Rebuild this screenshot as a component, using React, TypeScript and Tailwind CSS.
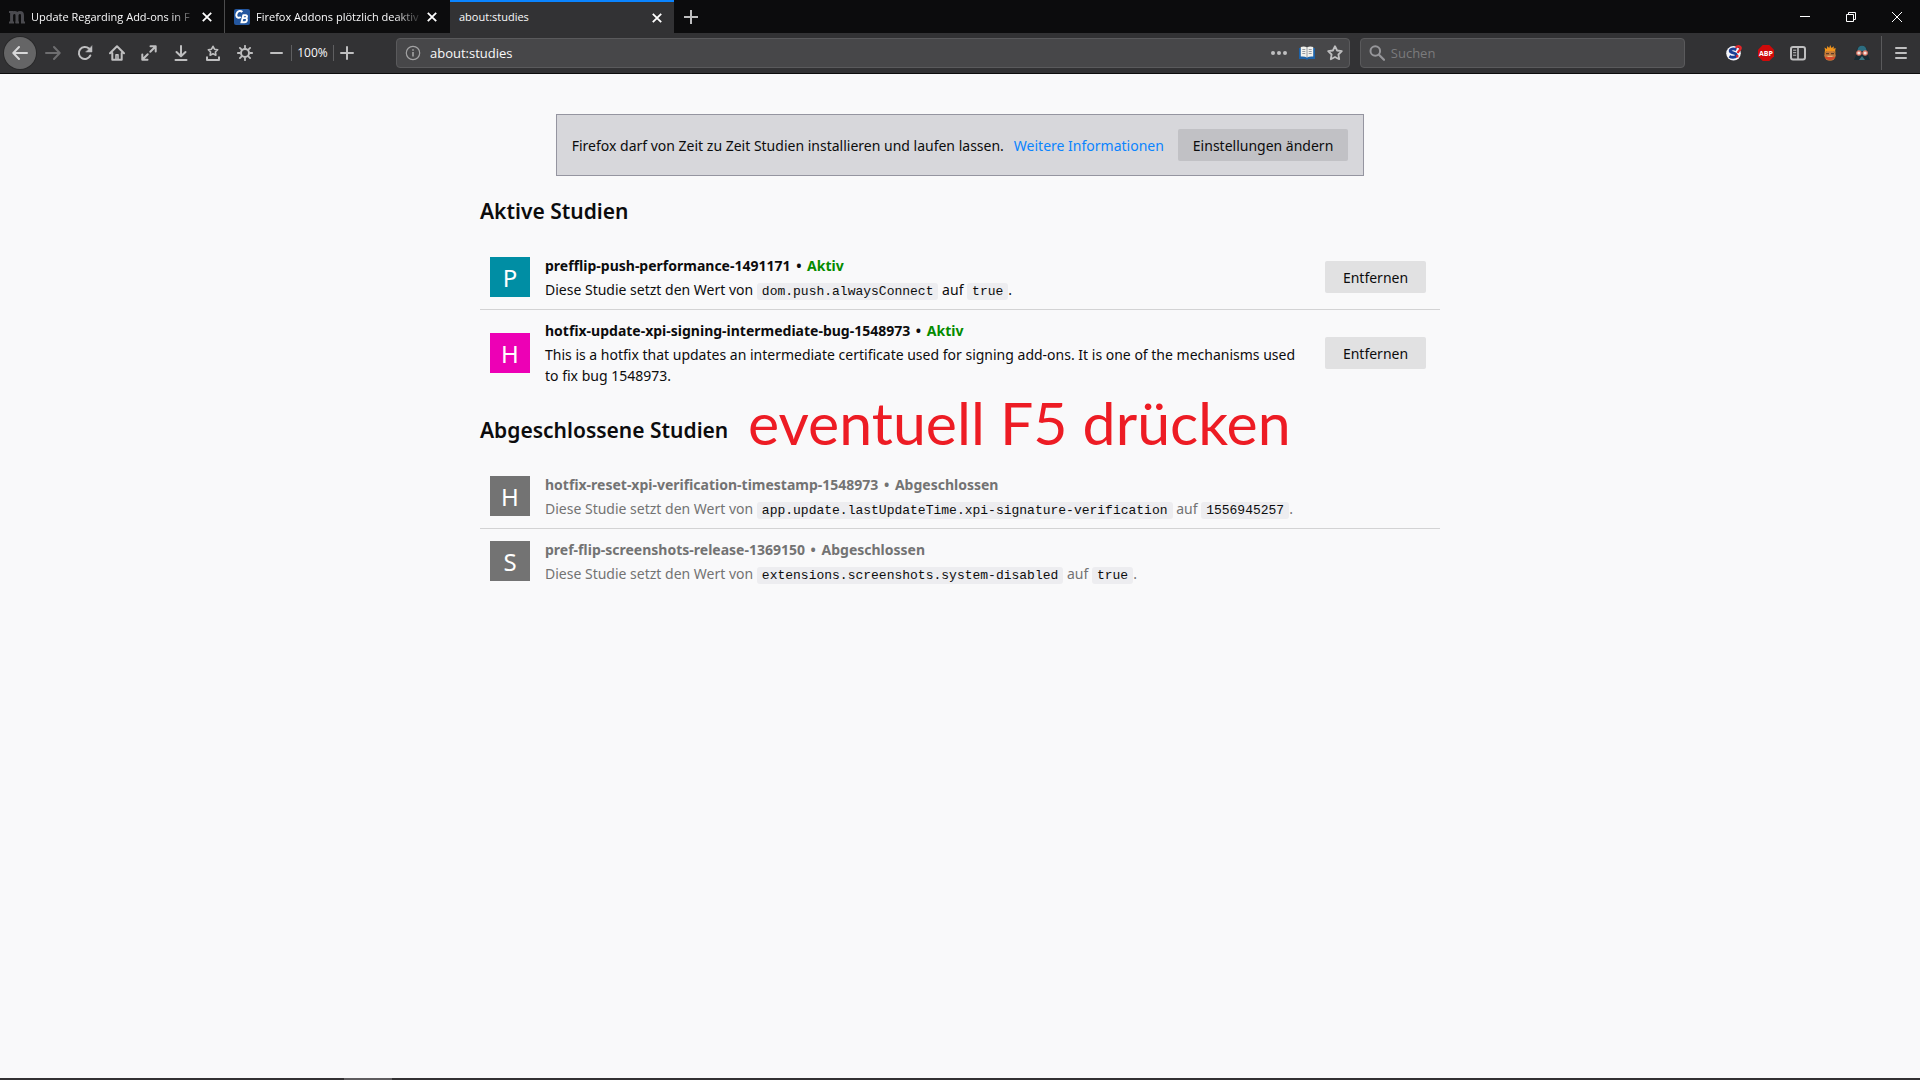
import type { ReactNode } from "react";

function Glyph({ children, size = 16, className = "" }: { children: ReactNode; size?: number; className?: string }) {
  return (
    <svg
      width={size}
      height={size}
      viewBox="0 0 16 16"
      fill="none"
      stroke="currentColor"
      strokeWidth="2"
      strokeLinecap="round"
      strokeLinejoin="round"
      className={"shrink-0 " + className}
      aria-hidden="true"
    >
      {children}
    </svg>
  );
}

function ToolButton({ label, children, className = "w-8" }: { label: string; children: ReactNode; className?: string }) {
  return (
    <button type="button" aria-label={label} className={"flex h-8 shrink-0 items-center justify-center " + className}>
      {children}
    </button>
  );
}

function CloseButton({ className = "" }: { className?: string }) {
  return (
    <button type="button" aria-label="Tab schließen" className={"shrink-0 text-white " + className}>
      <svg width="10" height="10" viewBox="0 0 10 10" stroke="currentColor" strokeWidth="1.8" aria-hidden="true">
        <path d="M.8.8l8.4 8.4M9.2.8L.8 9.2" />
      </svg>
    </button>
  );
}

function BackgroundTab({ title, icon, last = false }: { title: string; icon: ReactNode; last?: boolean }) {
  return (
    <div
      className={"flex w-[225px] items-center pl-[9px] " + (last ? "pr-[13px]" : "border-r border-[#4c4c4d] pr-3")}
    >
      {icon}
      <span className="ml-1.5 min-w-0 flex-1 overflow-hidden pt-px whitespace-nowrap [mask-image:linear-gradient(to_left,transparent,black_28px)]">
        {title}
      </span>
      <CloseButton className="ml-1" />
    </div>
  );
}

function TabBar() {
  return (
    <header className="flex h-[33px] bg-[#0c0c0d] text-[11px] text-[#f9f9fa]">
      <BackgroundTab
        title="Update Regarding Add-ons in F"
        icon={
          <svg width="16" height="14" viewBox="0 0 16 14" className="shrink-0" fill="none" stroke="#4a4a4f" strokeWidth="3" aria-hidden="true">
            <path d="M2.6 1v12M2.600 5c.5-1.700 1.500-2.500 2.900-2.500 1.800 0 2.500 1 2.500 2.900V13M8 5c.5-1.700 1.600-2.500 3-2.500 1.800 0 2.500 1 2.500 2.900V13" />
            <path d="M0 2h3M0 12.500h5M6.500 12.500h3.500M12 12.500h4" strokeWidth="1.800" />
          </svg>
        }
      />
      <BackgroundTab
        last
        title="Firefox Addons plötzlich deaktiv"
        icon={
          <svg width="16" height="16" viewBox="0 0 16 16" className="shrink-0" aria-hidden="true">
            <rect width="16" height="16" rx="2" fill="#24579f" />
            <path d="M8.300 3C7 1.500 4.600 1.600 3.300 3.300 1.800 5.300 2 8 3.800 8.600c1 .3 2 0 2.900-.6" fill="none" stroke="#fff" strokeWidth="2" />
            <path d="M8.600 6.200h3.200c1.700 0 1.700 2.800-.3 2.900H8.700M9.300 6.200L7.500 13.300h3c2.900 0 3.300-4.100.8-4.200" fill="none" stroke="#fff" strokeWidth="1.900" />
          </svg>
        }
      />
      <div className="flex w-[224px] items-center border-t-2 border-[#0a84ff] bg-[#323234] pr-3 pl-[9px]">
        <span className="flex-1">about:studies</span>
        <CloseButton />
      </div>
      <button type="button" aria-label="Neuer Tab" className="flex w-[34px] items-center justify-center text-[#bebebf]">
        <svg width="14" height="14" viewBox="0 0 14 14" stroke="currentColor" strokeWidth="2" aria-hidden="true">
          <path d="M7 0v14M0 7h14" />
        </svg>
      </button>
      <div className="ml-auto flex text-white">
        <button type="button" aria-label="Minimieren" className="flex w-[46px] items-center justify-center">
          <svg width="10" height="10" viewBox="0 0 10 10" stroke="currentColor" aria-hidden="true">
            <path d="M0 4.500h10" />
          </svg>
        </button>
        <button type="button" aria-label="Verkleinern" className="flex w-[46px] items-center justify-center">
          <svg width="10" height="10" viewBox="0 0 10 10" fill="none" stroke="currentColor" aria-hidden="true">
            <path d="M.5 2.500h7v7h-7zM2.500 2.500v-2h7v7h-2" />
          </svg>
        </button>
        <button type="button" aria-label="Schließen" className="flex w-[46px] items-center justify-center">
          <svg width="10" height="10" viewBox="0 0 10 10" stroke="currentColor" aria-hidden="true">
            <path d="M0 0l10 10M10 0L0 10" />
          </svg>
        </button>
      </div>
    </header>
  );
}

function NavBar() {
  return (
    <nav className="flex h-[41px] items-center border-b border-[#0c0c0d] bg-[#323234] pr-[3px] pl-1 text-[#bfbfc0]">
      <ToolButton label="Zurück" className="w-8 rounded-full bg-[#656566] text-[#d8d8d9] ring-1 ring-[#29292a]">
        <Glyph>
          <path d="M15 8H1.500M7 2L1.300 8 7 14" />
        </Glyph>
      </ToolButton>
      <ToolButton label="Vor" className="ml-px w-8 text-[#6e6e70]">
        <Glyph>
          <path d="M1 8h13.500M9 2l5.700 6L9 14" />
        </Glyph>
      </ToolButton>
      <ToolButton label="Neu laden">
        <Glyph>
          <path d="M13.300 10.500A6 6 0 1 1 12 3.600l1.500 1.500" />
          <path d="M15 1v6H9z" fill="currentColor" strokeWidth="0.500" />
        </Glyph>
      </ToolButton>
      <ToolButton label="Startseite">
        <Glyph>
          <path d="M1 8.300L8 1.300l7 7M3.300 8v6.700h9.400V8" />
          <path d="M7 14V9.800h2V14" strokeWidth="1.600" />
        </Glyph>
      </ToolButton>
      <ToolButton label="Vollbild">
        <Glyph>
          <path d="M9.300 6.700l5-5M9.500 1.300h5.200v5.200M6.700 9.300l-5 5M1.300 9.500v5.200h5.200" />
        </Glyph>
      </ToolButton>
      <ToolButton label="Downloads">
        <Glyph>
          <path d="M8 1v10M3.500 7L8 11.300 12.500 7M2.500 15h11" />
        </Glyph>
      </ToolButton>
      <ToolButton label="Lesezeichen">
        <Glyph>
          <path d="M8 1.300l1.500 2.900 3.200.5-2.300 2.300.5 3.200L8 8.700l-2.900 1.500.5-3.200-2.300-2.300 3.200-.5z" strokeWidth="1.600" />
          <path d="M2 11.500V15h12v-3.500" strokeLinecap="butt" />
        </Glyph>
      </ToolButton>
      <ToolButton label="Einstellungen">
        <Glyph>
          <circle cx="8" cy="8" r="4" />
          <path d="M8 .8v2M8 13.200v2M.8 8h2M13.200 8h2M2.900 2.900l1.500 1.500M11.600 11.600l1.500 1.500M13.100 2.900l-1.500 1.500M4.400 11.600l-1.500 1.500" strokeWidth="1.800" />
        </Glyph>
      </ToolButton>
      <ToolButton label="Verkleinern" className="w-[30px]">
        <Glyph>
          <path d="M3 8h11" />
        </Glyph>
      </ToolButton>
      <button type="button" className="h-4 w-[43px] border-x border-[#5f5f61] text-xs leading-4 text-[#f9f9fa]">
        100%
      </button>
      <ToolButton label="Vergrößern" className="-ml-[3px] w-8">
        <Glyph>
          <path d="M2 8h12M8 2v12" />
        </Glyph>
      </ToolButton>

      <div className="ml-[33px] flex h-[30px] min-w-0 flex-1 items-center rounded-sm border border-[#5a5a5c] bg-[#474749] pr-1.5 pl-2">
        <svg width="16" height="16" viewBox="0 0 16 16" fill="none" stroke="#a3a3a4" className="shrink-0" aria-hidden="true">
          <circle cx="8" cy="8" r="6.700" strokeWidth="1.200" />
          <path d="M8 7v4.500M8 4.200v1.600" strokeWidth="1.600" />
        </svg>
        <input
          aria-label="Adresse"
          defaultValue="about:studies"
          className="ml-[9px] min-w-0 flex-1 bg-transparent pt-0.5 text-[13px] text-[#f9f9fa] outline-none"
        />
        <div className="flex items-center gap-3">
          <button type="button" aria-label="Seitenaktionen">
            <Glyph>
              <g fill="currentColor" stroke="none">
                <circle cx="2" cy="8" r="2" />
                <circle cx="8" cy="8" r="2" />
                <circle cx="14" cy="8" r="2" />
              </g>
            </Glyph>
          </button>
          <button type="button" aria-label="Leseansicht">
            <svg width="16" height="14" viewBox="0 0 16 14" aria-hidden="true">
              <path d="M0 2h16v11H9.500L8 14l-1.500-1H0z" fill="#1d62a8" />
              <path d="M1.800 1Q5.500 0 8 1.500 10.500 0 14.200 1v9.500Q10.500 10 8 11.500 5.500 10 1.800 10.500z" fill="#f1f1ec" />
              <path d="M8 1.500v10M3.300 3.500h3M3.300 5.500h3M3.300 7.500h3M9.700 3.500h3M9.700 5.500h3M9.700 7.500h3" stroke="#8c9198" strokeWidth="0.900" />
            </svg>
          </button>
          <button type="button" aria-label="Lesezeichen hinzufügen">
            <Glyph>
              <path d="M8 1.200l2.100 4.300 4.700.7-3.400 3.300.8 4.700L8 12l-4.200 2.200.8-4.700L1.200 6.200l4.700-.7z" strokeWidth="1.800" />
            </Glyph>
          </button>
        </div>
      </div>

      <div className="ml-2.5 flex h-[30px] w-[17%] items-center rounded-sm border border-[#5a5a5c] bg-[#474749] px-2">
        <Glyph className="text-[#96969a]">
          <circle cx="6.300" cy="6" r="4.800" />
          <path d="M10 9.800l5 5" strokeWidth="2.200" />
        </Glyph>
        <input
          aria-label="Suchen"
          placeholder="Suchen"
          className="ml-[6px] min-w-0 flex-1 bg-transparent pt-0.5 text-[13px] outline-none placeholder:text-[#7b7b7d]"
        />
      </div>

      <div className="ml-[33px] flex items-center">
        <ToolButton label="Startpage">
          <svg width="16" height="16" viewBox="0 0 16 16" aria-hidden="true">
            <circle cx="7.500" cy="8.300" r="7.300" fill="#f4f5fa" />
            <path d="M10.300 4.800C7.500 3.300 4 3.800 4.200 6c.2 2.200 6.300 1.600 6.200 4.100-.1 2.400-4.200 2.800-7 1.100" fill="none" stroke="#1b3f94" strokeWidth="2.800" />
            <path d="M9.800 2.800C11.500.3 15.500 1 14.500 3.800c-.6 1.700-2.300 2-2.700 4.200M11.300 10v2.500" fill="none" stroke="#e3262b" strokeWidth="2.300" />
          </svg>
        </ToolButton>
        <ToolButton label="Adblock Plus">
          <svg width="16" height="16" viewBox="0 0 16 16" aria-hidden="true">
            <path d="M4.700 0h6.600L16 4.700v6.600L11.300 16H4.700L0 11.300V4.700z" fill="#cf0a0a" />
            <text x="8" y="10.600" textAnchor="middle" fontSize="7" fontWeight="700" fill="#fff" fontFamily="Open Sans, sans-serif">
              ABP
            </text>
          </svg>
        </ToolButton>
        <ToolButton label="Seitenleiste">
          <Glyph>
            <rect x="1" y="2" width="14" height="12.500" rx="2" />
            <path d="M8 2v12" strokeWidth="1.600" />
            <path d="M3.500 5.200h2.300M3.500 7.700h2.300M3.500 10.200h2.300" strokeWidth="1" />
          </Glyph>
        </ToolButton>
        <ToolButton label="Cookie-Manager">
          <svg width="16" height="16" viewBox="0 0 16 16" aria-hidden="true">
            <ellipse cx="8" cy="10.300" rx="5.700" ry="5.500" fill="#c57a3c" />
            <path d="M2.500 9L3 5 2.500 2.500 5 4 5.200 1 7.200 3 8.200 0l1.300 3L12 1.200l-.5 2.600L13.700 3l-.5 2.500.3 3-1.500-2.300H4.200z" fill="#f2951d" />
            <path d="M4 8.700h3M9 8.700h3" stroke="#5c3f2a" strokeWidth="1.300" />
            <path d="M2.700 12h10.600a5.500 4 0 0 1-10.600 0z" fill="#d8492b" />
            <path d="M5.500 11.300h5" stroke="#f0c08c" strokeWidth="1" />
          </svg>
        </ToolButton>
        <ToolButton label="Privatsphäre">
          <svg width="16" height="16" viewBox="0 0 16 16" aria-hidden="true">
            <path d="M2.500 6C3 2.500 5 .8 8 .8s5 1.700 5.500 5.200l.8 5 1.700 4H0l1.700-4z" fill="#182b33" />
            <path d="M3.300 6C3.500 2.500 5.300.8 8 .8s4.500 1.700 4.700 5.200z" fill="#2d6d80" />
            <circle cx="4.900" cy="8" r="2.200" fill="#f3e3dc" stroke="#d9705f" strokeWidth="1.200" />
            <circle cx="11.100" cy="8" r="2.200" fill="#f3e3dc" stroke="#d9705f" strokeWidth="1.200" />
            <path d="M5 15l3-4 3 4z" fill="#3b7480" />
          </svg>
        </ToolButton>
        <div className="ml-[3px] h-[34px] w-px bg-[#5a5a5c]" />
        <ToolButton label="Menü" className="ml-[3px] w-8">
          <Glyph>
            <path d="M3 3h10M3 8h10M3 13h10" />
          </Glyph>
        </ToolButton>
      </div>
    </nav>
  );
}

type Study = { name: string; initial: string; color: string; active: boolean; description: ReactNode };

function Code({ children }: { children: string }) {
  return (
    <code className="rounded-[3px] bg-[#ededf0] px-[5px] py-px font-['Liberation_Mono',monospace] text-[13px] leading-4 text-[#0c0c0d]">
      {children}
    </code>
  );
}

function PrefText({ pref, value }: { pref: string; value: string }) {
  return (
    <>
      Diese Studie setzt den Wert von <Code>{pref}</Code> auf <Code>{value}</Code>.
    </>
  );
}

const activeStudies: Study[] = [
  {
    name: "prefflip-push-performance-1491171",
    initial: "P",
    color: "bg-[#008ea4]",
    active: true,
    description: <PrefText pref="dom.push.alwaysConnect" value="true" />,
  },
  {
    name: "hotfix-update-xpi-signing-intermediate-bug-1548973",
    initial: "H",
    color: "bg-[#ed00b5]",
    active: true,
    description:
      "This is a hotfix that updates an intermediate certificate used for signing add-ons. It is one of the mechanisms used to fix bug 1548973.",
  },
];

const completedStudies: Study[] = [
  {
    name: "hotfix-reset-xpi-verification-timestamp-1548973",
    initial: "H",
    color: "bg-[#737373]",
    active: false,
    description: <PrefText pref="app.update.lastUpdateTime.xpi-signature-verification" value="1556945257" />,
  },
  {
    name: "pref-flip-screenshots-release-1369150",
    initial: "S",
    color: "bg-[#737373]",
    active: false,
    description: <PrefText pref="extensions.screenshots.system-disabled" value="true" />,
  },
];

function StudyRow({ study }: { study: Study }) {
  return (
    <li className="flex items-center border-b border-[#d3d3d4] px-2.5 py-[9px] last:border-b-0">
      <div className={"flex size-10 shrink-0 items-center justify-center pt-0.5 text-2xl text-white " + study.color}>
        {study.initial}
      </div>
      <div className={"ml-[15px] min-w-0 flex-1 pt-0.5 " + (study.active ? "" : "text-[#737373]")}>
        <h3 className="text-sm leading-5 font-bold">
          {study.name} <span className="mx-0.5">•</span>{" "}
          <span className={study.active ? "text-[#058b00]" : ""}>{study.active ? "Aktiv" : "Abgeschlossen"}</span>
        </h3>
        <p className="mt-[3px] text-sm leading-[21px]">{study.description}</p>
      </div>
      {study.active && (
        <button type="button" className="mr-1 ml-4 h-8 w-[101px] shrink-0 rounded-xs bg-[#e1e1e2] pt-0.5 text-sm">
          Entfernen
        </button>
      )}
    </li>
  );
}

function StudySection({ title, studies, note }: { title: string; studies: Study[]; note?: string }) {
  return (
    <section>
      <div className="relative mt-5 mb-[19px]">
        <h2 className="text-[21px] leading-[30px] font-semibold">{title}</h2>
        {note && (
          <p className="absolute -top-6 left-[268px] font-['Lato',sans-serif] text-[59px] leading-[64px] whitespace-nowrap text-[#ed1c24]">
            {note}
          </p>
        )}
      </div>
      <ul>
        {studies.map((study) => (
          <StudyRow key={study.name} study={study} />
        ))}
      </ul>
    </section>
  );
}

export default function App() {
  return (
    <div className="flex min-h-screen flex-col bg-[#f9f9fa] font-['Open_Sans','Noto_Sans',sans-serif] text-[#0c0c0d]">
      <TabBar />
      <NavBar />
      <main className="mx-auto w-full max-w-[960px] flex-1 pt-10 font-['Noto_Sans','Open_Sans',sans-serif]">
        <div className="mx-auto flex w-fit items-center border border-[#9595a0] bg-[#d7d7db] px-[15px] py-3.5 text-sm">
          <span className="pt-0.5">Firefox darf von Zeit zu Zeit Studien installieren und laufen lassen.</span>
          <a href="#info" className="ml-2.5 pt-0.5 text-[#0a84ff]">
            Weitere Informationen
          </a>
          <button type="button" className="ml-3.5 h-8 rounded-xs bg-[#c1c1c5] px-[15px] pt-0.5">
            Einstellungen ändern
          </button>
        </div>
        <StudySection title="Aktive Studien" studies={activeStudies} />
        <StudySection title="Abgeschlossene Studien" studies={completedStudies} note="eventuell F5 drücken" />
      </main>
      <footer className="flex h-0.5 bg-[#333133]">
        <div className="ml-[344px] w-12 bg-[#5f5d5f]" />
      </footer>
    </div>
  );
}
